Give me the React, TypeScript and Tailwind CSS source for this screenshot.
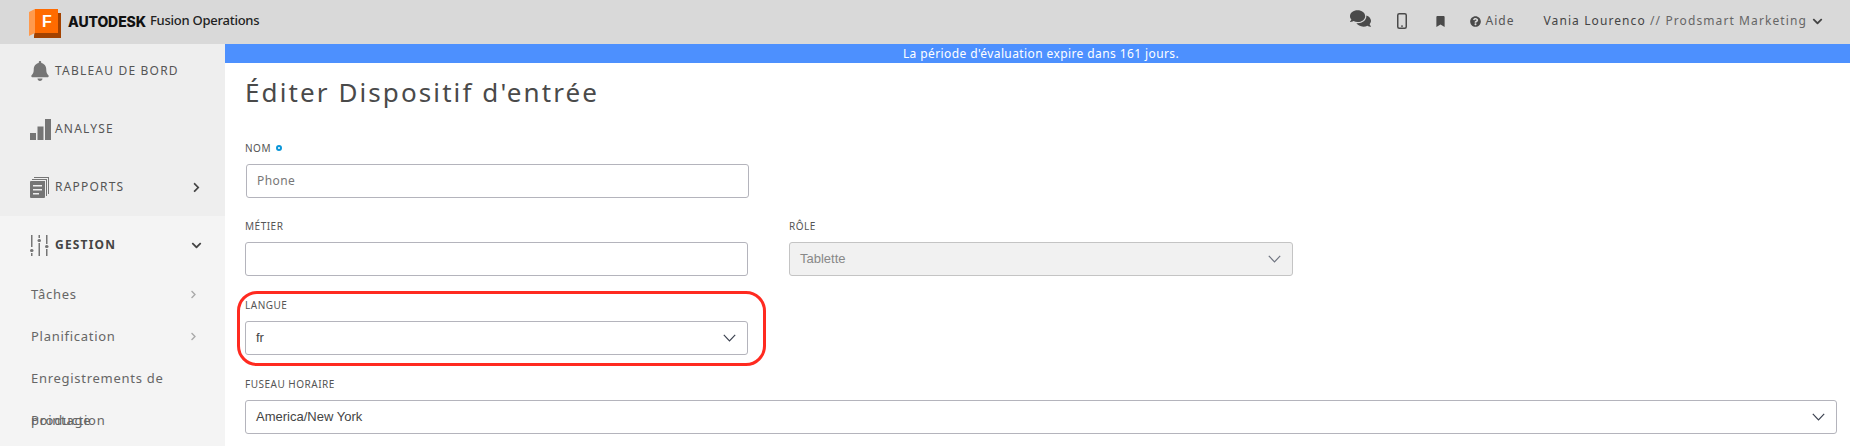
import React from 'react';
import { FaBell, FaBookmark, FaChevronDown, FaChevronRight, FaComments, FaQuestionCircle } from 'react-icons/fa';

const uiFont = "font-['Noto_Sans',sans-serif]";

function BarsIcon() {
  return (
    <svg width="21" height="21" viewBox="0 0 21 21" fill="#757575">
      <rect x="0" y="14" width="6" height="7" />
      <rect x="7.5" y="7.5" width="6" height="13.5" />
      <rect x="15" y="0" width="6" height="21" />
    </svg>
  );
}

function ReportsIcon() {
  return (
    <svg width="19" height="21" viewBox="0 0 19 21" fill="#757575">
      <path d="M4 0h15v17h-1V1H4z" />
      <path d="M2 2h15v17h-1V3H2z" />
      <path d="M0 5a1 1 0 0 1 1-1h14v16a1 1 0 0 1-1 1H1a1 1 0 0 1-1-1z" />
      <rect x="3" y="8" width="9" height="1.5" fill="#eeeeee" />
      <rect x="3" y="12" width="9" height="1.5" fill="#eeeeee" />
      <rect x="3" y="16" width="6" height="1.5" fill="#eeeeee" />
    </svg>
  );
}

function SlidersIcon() {
  return (
    <svg width="19" height="21" viewBox="0 0 19 21" fill="#757575">
      <rect x="1" y="0" width="1.5" height="12" />
      <rect x="0" y="14" width="3.5" height="3" rx="1.5" />
      <rect x="1" y="18" width="1.5" height="3" />
      <rect x="8.5" y="0" width="1.5" height="3" />
      <rect x="7.5" y="4" width="3.5" height="3" rx="1.5" />
      <rect x="8.5" y="8" width="1.5" height="13" />
      <rect x="16" y="0" width="1.5" height="9" />
      <rect x="15" y="10" width="3.5" height="3" rx="1.5" />
      <rect x="16" y="14" width="1.5" height="7" />
    </svg>
  );
}

function PhoneIcon() {
  return (
    <svg width="10" height="16" viewBox="0 0 10 16">
      <rect x="0.75" y="0.75" width="8.5" height="14.5" rx="1.5" fill="none" stroke="#4a4a4a" strokeWidth="1.5" />
      <rect x="4" y="12.5" width="2" height="1.2" fill="#4a4a4a" />
    </svg>
  );
}

function SelectChevron({ muted = false }: { muted?: boolean }) {
  return (
    <svg width="13" height="8" viewBox="0 0 13 8" fill="none" stroke={muted ? '#6f7480' : '#3c4250'} strokeWidth="1.2">
      <path d="M0.8 0.8 6.5 6.8 12.2 0.8" />
    </svg>
  );
}

function AutodeskLogo() {
  return (
    <svg width="33" height="30" viewBox="0 0 33 30" className="mt-[3px]">
      <path d="M8 5h24v25H5v-2z" fill="#a34200" />
      <path d="M6 1h23v24H6z" fill="#ff6b00" />
      <path d="M0 4l6-3v24l-6 3z" fill="#ff9a4d" />
      <text x="18" y="19" textAnchor="middle" fontSize="16" fontWeight="700" fill="#ffffff" fontFamily="Liberation Sans, sans-serif">F</text>
    </svg>
  );
}

function NavItem({ icon, label, bold = false, chevron }: { icon: React.ReactNode; label: string; bold?: boolean; chevron?: React.ReactNode }) {
  return (
    <div className="flex h-[52px] items-center pl-[30px] pr-[22px]">
      <div className="flex w-[25px] shrink-0 items-center">{icon}</div>
      <span className={`${uiFont} text-[12px] uppercase tracking-[1.2px] ${bold ? 'font-bold text-[#444]' : 'text-[#555]'}`}>{label}</span>
      {chevron && <div className="ml-auto flex w-[14px] justify-center">{chevron}</div>}
    </div>
  );
}

function SubItem({ label, arrow = false }: { label: string; arrow?: boolean }) {
  return (
    <div className={`${uiFont} relative h-[42px] w-[200px] pl-[31px] text-[13px] leading-[42px] tracking-[0.72px] text-[#666]`}>
      {label}
      {arrow && <FaChevronRight className="absolute right-[2px] top-[17px] text-[9px] text-[#aaa]" />}
    </div>
  );
}

function FieldLabel({ children }: { children: React.ReactNode }) {
  return <div className={`${uiFont} mb-[9px] flex h-[14px] items-center text-[10px] uppercase leading-[14px] tracking-[0.5px] text-[#555]`}>{children}</div>;
}

function SelectBox({ value, disabled = false }: { value: string; disabled?: boolean }) {
  return (
    <div className={`flex h-[34px] items-center justify-between rounded-[3px] border pl-[10px] pr-[11px] font-['Liberation_Sans',sans-serif] text-[13px] ${disabled ? 'border-[#c4c4c4] bg-[#f1f1f1] text-[#888]' : 'border-[#b4b4bc] bg-white text-[#444]'}`}>
      <span>{value}</span>
      <SelectChevron muted={disabled} />
    </div>
  );
}

export default function App() {
  return (
    <div className="flex h-[446px] w-[1850px] flex-col overflow-hidden bg-white">
      <header className="flex h-[44px] shrink-0 items-center bg-[#d9d9d9] pb-[2px] pl-[29px] pr-[27px]">
        <AutodeskLogo />
        <span className="ml-[6px] font-['Inter',sans-serif] text-[14px] font-extrabold tracking-[-0.1px] text-[#111]">AUTODESK</span>
        <span className={`${uiFont} ml-[4px] text-[13px] font-medium tracking-[-0.25px] text-[#222]`}>Fusion Operations</span>
        <div className="ml-auto flex items-center text-[#4a4a4a]">
          <FaComments className="-mt-[6px] text-[21px]" />
          <div className="ml-[26px]"><PhoneIcon /></div>
          <FaBookmark className="ml-[28px] text-[11px]" />
          <FaQuestionCircle className="ml-[24px] text-[11px]" />
          <span className={`${uiFont} ml-[5px] text-[12px] tracking-[1px] text-[#555]`}>Aide</span>
          <span className={`${uiFont} ml-[29px] text-[12px] tracking-[1.1px] text-[#444]`}>
            Vania Lourenco <span className="text-[#666]">// Prodsmart Marketing</span>
          </span>
          <FaChevronDown className="ml-[5px] text-[11px] text-[#444]" />
        </div>
      </header>
      <div className="flex min-h-0 flex-1">
        <aside className="flex w-[225px] shrink-0 flex-col bg-[#f4f4f4]">
          <div className="flex h-[172px] flex-col gap-[6px] bg-[#eeeeee] pt-[1px]">
            <NavItem icon={<FaBell className="text-[20px] text-[#757575]" />} label="Tableau de bord" />
            <NavItem icon={<BarsIcon />} label="Analyse" />
            <NavItem icon={<ReportsIcon />} label="Rapports" chevron={<FaChevronRight className="text-[11px] text-[#444]" />} />
          </div>
          <div className="pt-[3px]">
            <NavItem icon={<SlidersIcon />} label="Gestion" bold chevron={<FaChevronDown className="text-[11px] text-[#444]" />} />
          </div>
          <div className="mt-[2px]">
            <SubItem label="Tâches" arrow />
            <SubItem label="Planification" arrow />
            <SubItem label="Enregistrements de production" />
            <SubItem label="Pointage" />
          </div>
        </aside>
        <main className="min-w-0 flex-1">
          <div className={`${uiFont} h-[19px] bg-[#4d90fe] pl-[7px] text-center text-[12px] leading-[19px] tracking-[0.4px] text-white`}>
            La période d'évaluation expire dans 161 jours.
          </div>
          <div className="pl-[20px] pr-[13px]">
            <h1 className={`${uiFont} mt-[13px] h-[33px] text-[26px] leading-[32px] tracking-[2.1px] text-[#4a4a4a]`}>Éditer Dispositif d'entrée</h1>
            <div className="mt-[32px] w-[504px]">
              <FieldLabel>
                Nom <span className="ml-[5px] inline-block h-[6px] w-[6px] rounded-full border-2 border-[#0a96d8]" />
              </FieldLabel>
              <div className={`${uiFont} ml-[1px] flex h-[34px] items-center rounded-[3px] border border-[#b4b4bc] pl-[10px] text-[12px] tracking-[0.4px] text-[#777]`}>Phone</div>
            </div>
            <div className="mt-[21px] flex">
              <div className="w-[503px]">
                <FieldLabel>Métier</FieldLabel>
                <div className="h-[34px] rounded-[3px] border border-[#b4b4bc]" />
              </div>
              <div className="ml-[41px] w-[504px]">
                <FieldLabel>Rôle</FieldLabel>
                <SelectBox value="Tablette" disabled />
              </div>
            </div>
            <div className="relative mt-[22px] w-[503px]">
              <FieldLabel>Langue</FieldLabel>
              <SelectBox value="fr" />
              <div className="pointer-events-none absolute -left-[8px] -right-[18px] -top-[7px] -bottom-[11px] rounded-[20px] border-[3px] border-[#ff2a20]" />
            </div>
            <div className="mt-[22px]">
              <FieldLabel>Fuseau horaire</FieldLabel>
              <SelectBox value="America/New York" />
            </div>
          </div>
        </main>
      </div>
    </div>
  );
}
